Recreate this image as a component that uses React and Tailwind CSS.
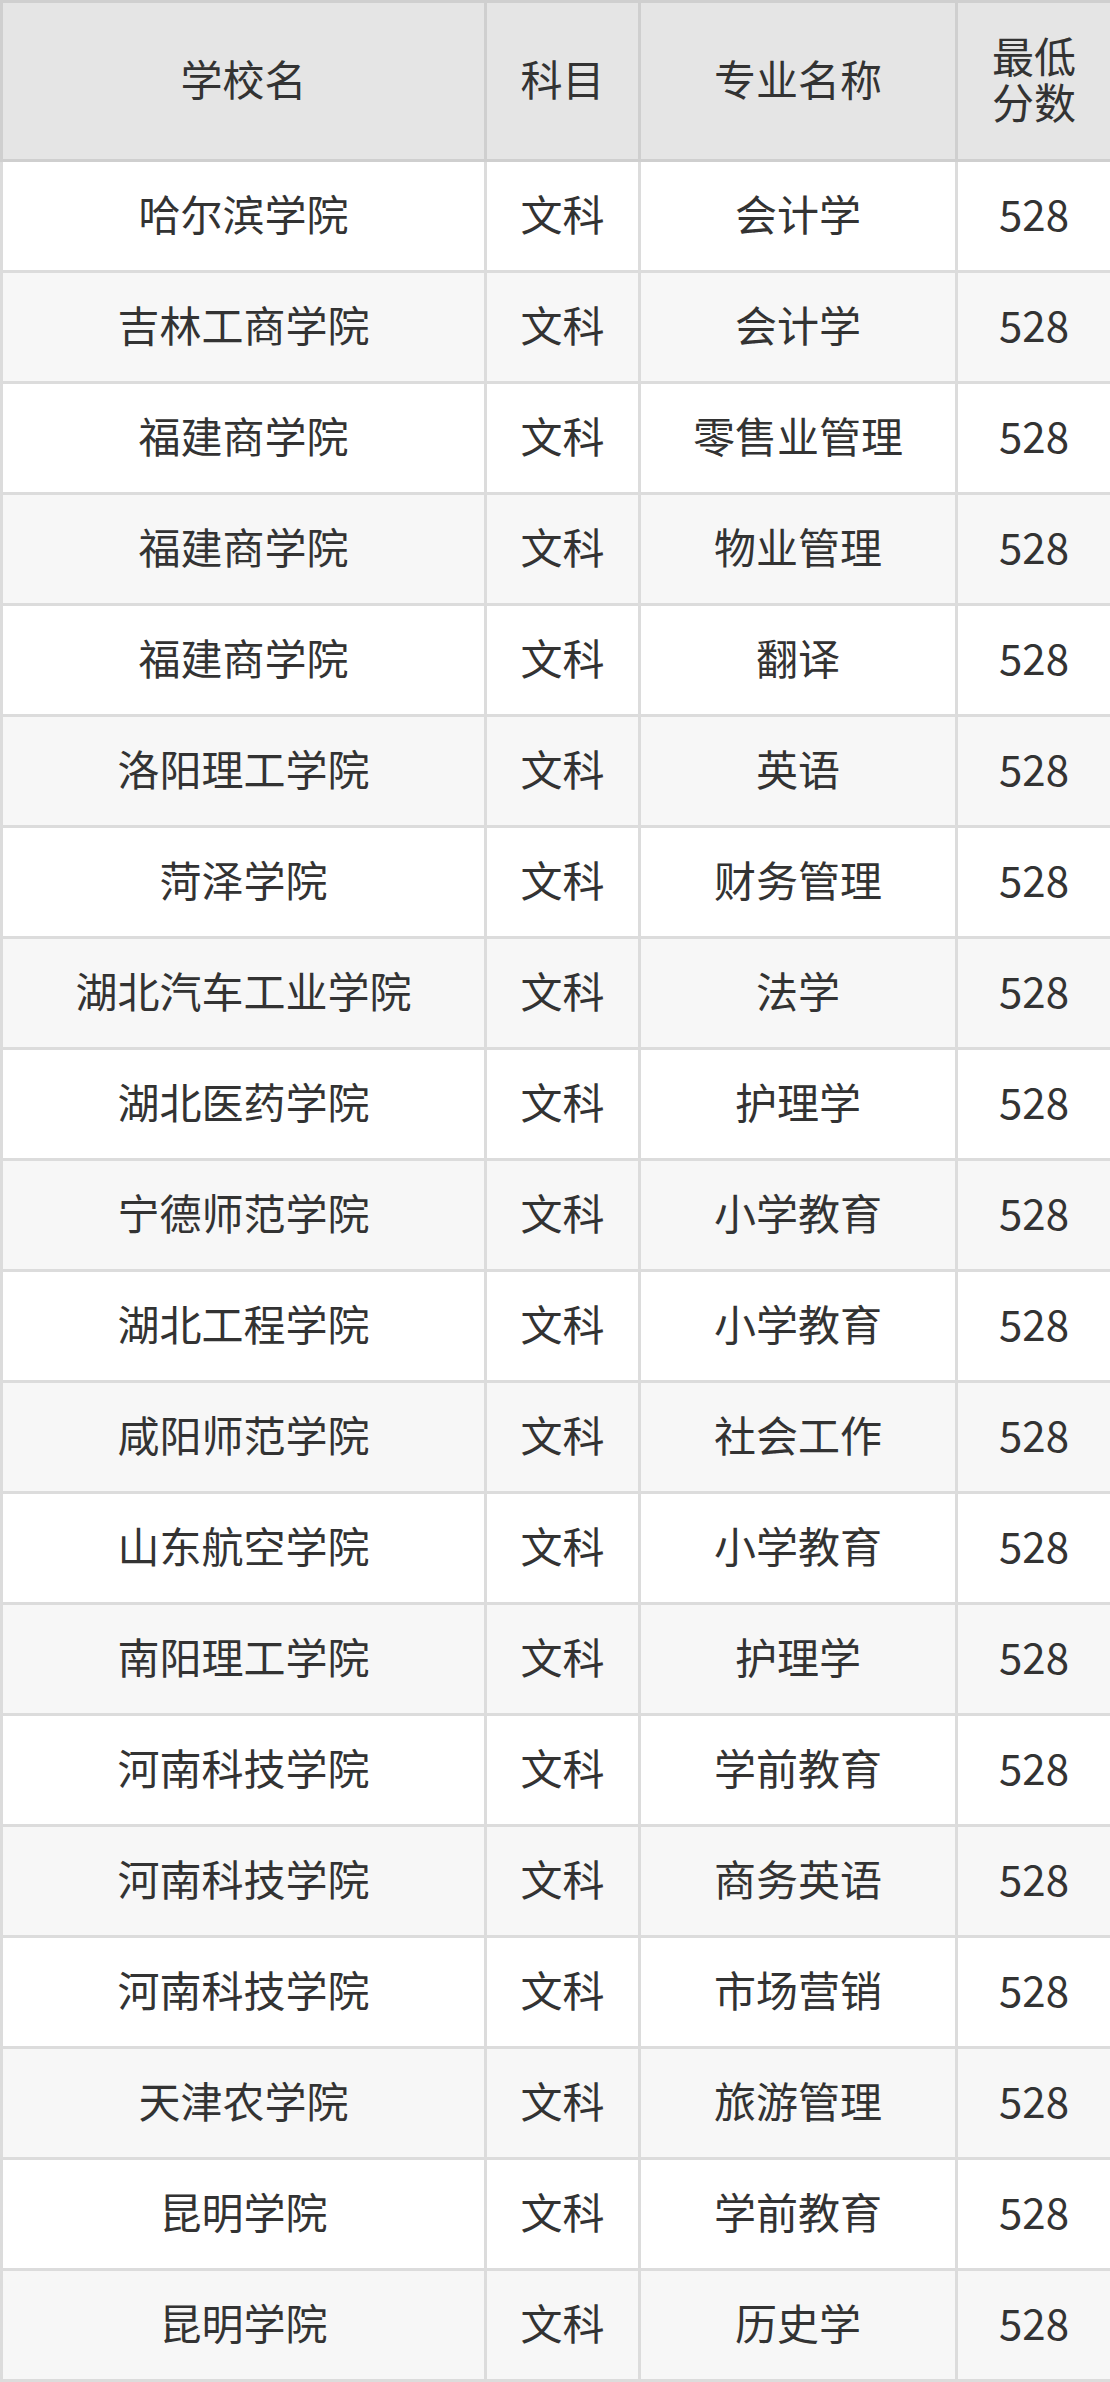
import React from 'react';

const rows = [
  ['哈尔滨学院', '文科', '会计学', '528'],
  ['吉林工商学院', '文科', '会计学', '528'],
  ['福建商学院', '文科', '零售业管理', '528'],
  ['福建商学院', '文科', '物业管理', '528'],
  ['福建商学院', '文科', '翻译', '528'],
  ['洛阳理工学院', '文科', '英语', '528'],
  ['菏泽学院', '文科', '财务管理', '528'],
  ['湖北汽车工业学院', '文科', '法学', '528'],
  ['湖北医药学院', '文科', '护理学', '528'],
  ['宁德师范学院', '文科', '小学教育', '528'],
  ['湖北工程学院', '文科', '小学教育', '528'],
  ['咸阳师范学院', '文科', '社会工作', '528'],
  ['山东航空学院', '文科', '小学教育', '528'],
  ['南阳理工学院', '文科', '护理学', '528'],
  ['河南科技学院', '文科', '学前教育', '528'],
  ['河南科技学院', '文科', '商务英语', '528'],
  ['河南科技学院', '文科', '市场营销', '528'],
  ['天津农学院', '文科', '旅游管理', '528'],
  ['昆明学院', '文科', '学前教育', '528'],
  ['昆明学院', '文科', '历史学', '528'],
];

export default function App() {
  return (
    <div className="w-[1110px] bg-white" style={{ fontFamily: '"Noto Sans CJK SC", "Noto Sans", sans-serif' }}>
      <table className="w-full table-fixed border-collapse text-[42px] text-[#333333]">
        <colgroup>
          <col className="w-[484px]" />
          <col className="w-[154px]" />
          <col className="w-[317px]" />
          <col className="w-[155px]" />
        </colgroup>
        <thead>
          <tr className="h-[159px] bg-[#e5e5e5]">
            <th className="border-[3px] border-[#cfcfcf] font-normal leading-[1.1] pb-[6px]">学校名</th>
            <th className="border-[3px] border-[#cfcfcf] font-normal leading-[1.1] pb-[6px]">科目</th>
            <th className="border-[3px] border-[#cfcfcf] font-normal leading-[1.1] pb-[6px]">专业名称</th>
            <th className="border-[3px] border-[#cfcfcf] font-normal leading-[1.1] pb-[6px] px-[20px]">最低分数</th>
          </tr>
        </thead>
        <tbody>
          {rows.map((r, i) => (
            <tr key={i} className={i % 2 === 0 ? 'h-[111px] bg-white' : 'h-[111px] bg-[#f7f7f7]'}>
              {r.map((c, j) => (
                <td key={j} className="border-[3px] border-[#dcdcdc] text-center leading-none pb-[6px]">
                  {c}
                </td>
              ))}
            </tr>
          ))}
        </tbody>
      </table>
    </div>
  );
}
